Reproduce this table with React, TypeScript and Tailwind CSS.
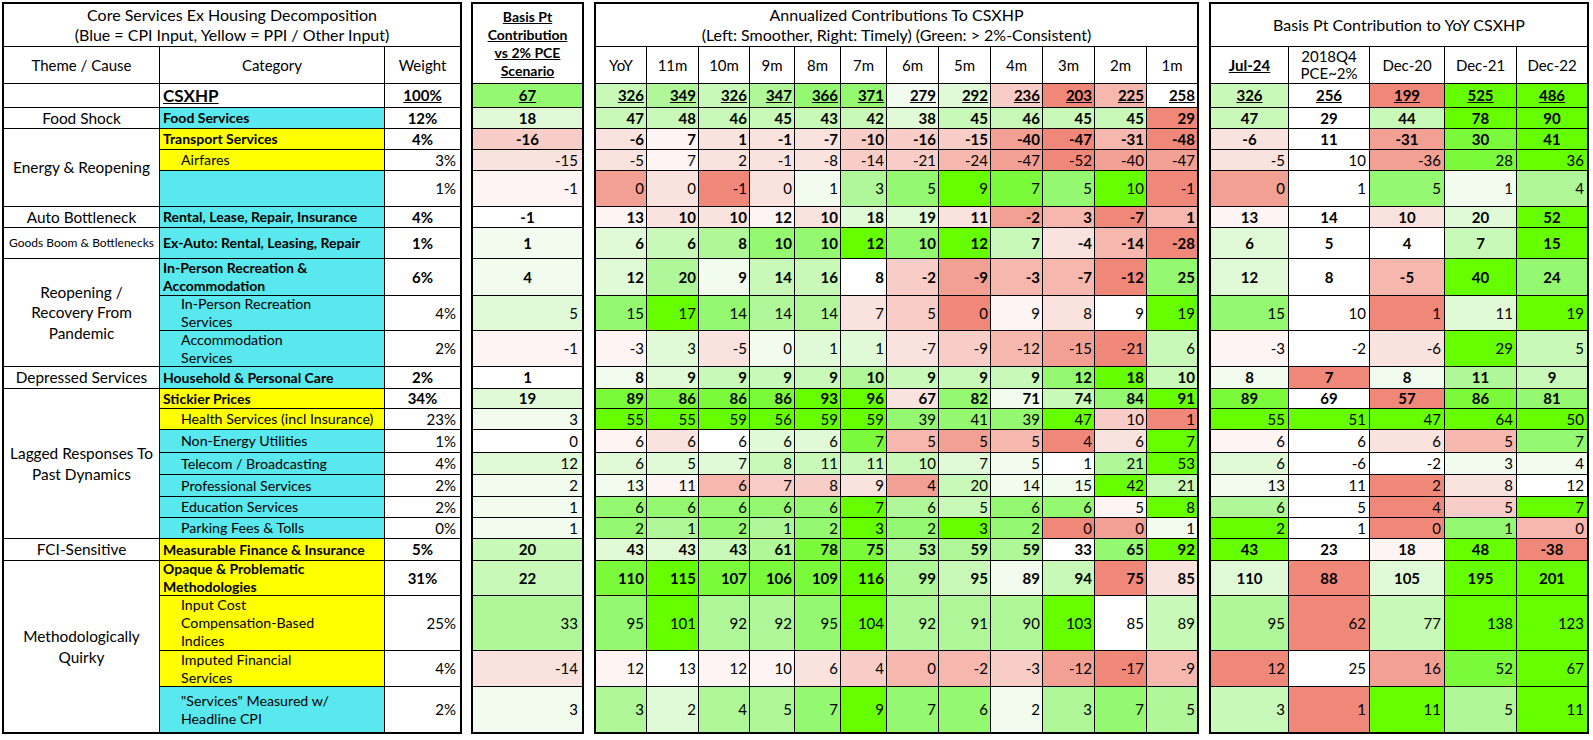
import React from 'react';

const BG: Record<string, string> = {
  W: 'bg-white',
  g0: 'bg-[#f2fcee]',
  g1: 'bg-[#e0fad7]',
  g2: 'bg-[#c9f9b8]',
  g3: 'bg-[#aff799]',
  g4: 'bg-[#94f870]',
  g5: 'bg-[#7bfa3c]',
  G: 'bg-[#66ff00]',
  r0: 'bg-[#fdf4f3]',
  r1: 'bg-[#fae2de]',
  r2: 'bg-[#f8cdc7]',
  r3: 'bg-[#f5b7ae]',
  r4: 'bg-[#f29f94]',
  R: 'bg-[#f0887a]',
};

const CAT_BG: Record<string, string> = {
  c: 'bg-[#58e8ee]',
  y: 'bg-[#ffff00]',
  w: 'bg-white',
};

const SPAN: Record<number, string> = {
  1: '',
  3: 'row-span-3',
  4: 'row-span-4',
  7: 'row-span-7',
};

const GRID_ROWS =
  'grid-rows-[43px_37px_24px_21px_21px_21px_36px_21px_31px_37px_35px_36px_22px_20px_21px_23px_22px_22px_21px_21px_22px_35px_55px_36px_45px]';

type Kind = 'top' | 'bold' | 'sub';

type Row = {
  theme?: string;
  span?: number;
  small?: boolean;
  cat: string;
  catBg: 'c' | 'y' | 'w';
  kind: Kind;
  weight: string;
  bp: string;
  bpC: string;
  ann: string;
  annC: string;
  yoy: string;
  yoyC: string;
};

const ROWS: Row[] = [
  { theme: '', span: 1, cat: 'CSXHP', catBg: 'w', kind: 'top', weight: '100%', bp: '67', bpC: 'g4',
    ann: '326 349 326 347 366 371 279 292 236 203 225 258', annC: 'g2 g3 g2 g3 g4 g4 g0 g1 r2 R r3 W',
    yoy: '326 256 199 525 486', yoyC: 'g2 W R G G' },
  { theme: 'Food Shock', span: 1, cat: 'Food Services', catBg: 'c', kind: 'bold', weight: '12%', bp: '18', bpC: 'g1',
    ann: '47 48 46 45 43 42 38 45 46 45 45 29', annC: 'g2 g2 g2 g2 g2 g2 g1 g2 g2 g2 g2 R',
    yoy: '47 29 44 78 90', yoyC: 'g2 W g2 G G' },
  { theme: 'Energy & Reopening', span: 3, cat: 'Transport Services', catBg: 'y', kind: 'bold', weight: '4%', bp: '-16', bpC: 'r2',
    ann: '-6 7 1 -1 -7 -10 -16 -15 -40 -47 -31 -48', annC: 'r1 r0 r1 r1 r1 r2 r2 r2 r4 R r3 R',
    yoy: '-6 11 -31 30 41', yoyC: 'r1 W r4 g5 G' },
  { cat: 'Airfares', catBg: 'y', kind: 'sub', weight: '3%', bp: '-15', bpC: 'r1',
    ann: '-5 7 2 -1 -8 -14 -21 -24 -47 -52 -40 -47', annC: 'r1 r0 r1 r1 r1 r2 r2 r3 r4 R r4 r4',
    yoy: '-5 10 -36 28 36', yoyC: 'r1 W r4 g5 G' },
  { cat: '', catBg: 'c', kind: 'sub', weight: '1%', bp: '-1', bpC: 'r0',
    ann: '0 0 -1 0 1 3 5 9 7 5 10 -1', annC: 'r4 r1 R r1 g0 g3 g4 G g5 g4 G R',
    yoy: '0 1 5 1 4', yoyC: 'r4 W g4 g0 g3' },
  { theme: 'Auto Bottleneck', span: 1, cat: 'Rental, Lease, Repair, Insurance', catBg: 'c', kind: 'bold', weight: '4%', bp: '-1', bpC: 'W',
    ann: '13 10 10 12 10 18 19 11 -2 3 -7 1', annC: 'r0 r1 r1 r0 r1 g1 g1 r1 r4 r3 R r3',
    yoy: '13 14 10 20 52', yoyC: 'r0 W r1 g1 G' },
  { theme: 'Goods Boom & Bottlenecks', span: 1, small: true, cat: 'Ex-Auto: Rental, Leasing, Repair', catBg: 'c', kind: 'bold', weight: '1%', bp: '1', bpC: 'g0',
    ann: '6 6 8 10 10 12 10 12 7 -4 -14 -28', annC: 'g1 g2 g3 g4 g4 G g4 G g2 r1 r3 R',
    yoy: '6 5 4 7 15', yoyC: 'g1 W W g2 G' },
  { theme: 'Reopening /\nRecovery From\nPandemic', span: 3, cat: 'In-Person Recreation &\nAccommodation', catBg: 'c', kind: 'bold', weight: '6%', bp: '4', bpC: 'g0',
    ann: '12 20 9 14 16 8 -2 -9 -3 -7 -12 25', annC: 'g1 g3 g0 g2 g2 W r2 r4 r3 r3 R g4',
    yoy: '12 8 -5 40 24', yoyC: 'g1 W r3 G g4' },
  { cat: 'In-Person Recreation\nServices', catBg: 'c', kind: 'sub', weight: '4%', bp: '5', bpC: 'g1',
    ann: '15 17 14 14 14 7 5 0 9 8 9 19', annC: 'g4 G g4 g3 g3 r1 r2 R r0 r1 W G',
    yoy: '15 10 1 11 19', yoyC: 'g4 W R g1 G' },
  { cat: 'Accommodation\nServices', catBg: 'c', kind: 'sub', weight: '2%', bp: '-1', bpC: 'r0',
    ann: '-3 3 -5 0 1 1 -7 -9 -12 -15 -21 6', annC: 'r0 g1 r1 g0 g1 g1 r1 r2 r3 r4 R g2',
    yoy: '-3 -2 -6 29 5', yoyC: 'r0 W r1 G g2' },
  { theme: 'Depressed Services', span: 1, cat: 'Household & Personal Care', catBg: 'c', kind: 'bold', weight: '2%', bp: '1', bpC: 'W',
    ann: '8 9 9 9 9 10 9 9 9 12 18 10', annC: 'g0 g1 g2 g2 g2 g3 g2 g2 g2 g4 G g2',
    yoy: '8 7 8 11 9', yoyC: 'g0 R g0 g3 g2' },
  { theme: 'Lagged Responses To\nPast Dynamics', span: 7, cat: 'Stickier Prices', catBg: 'y', kind: 'bold', weight: '34%', bp: '19', bpC: 'g1',
    ann: '89 86 86 86 93 96 67 82 71 74 84 91', annC: 'g5 g5 g5 g5 G G r1 g4 g0 g2 g4 G',
    yoy: '89 69 57 86 81', yoyC: 'g5 W R g5 g4' },
  { cat: 'Health Services (incl Insurance)', catBg: 'y', kind: 'sub', weight: '23%', bp: '3', bpC: 'g0',
    ann: '55 55 59 56 59 59 39 41 39 47 10 1', annC: 'G G G G G G g4 g4 g4 G r2 R',
    yoy: '55 51 47 64 50', yoyC: 'G G G G G' },
  { cat: 'Non-Energy Utilities', catBg: 'c', kind: 'sub', weight: '1%', bp: '0', bpC: 'W',
    ann: '6 6 6 6 6 7 5 5 5 4 6 7', annC: 'r0 r1 W g1 g1 g5 r3 r4 r3 R r1 G',
    yoy: '6 6 6 5 7', yoyC: 'r0 W r1 r3 g4' },
  { cat: 'Telecom / Broadcasting', catBg: 'c', kind: 'sub', weight: '4%', bp: '12', bpC: 'g1',
    ann: '6 5 7 8 11 11 10 7 5 1 21 53', annC: 'g1 g1 g1 g2 g2 g2 g2 g1 g0 W g3 G',
    yoy: '6 -6 -2 3 4', yoyC: 'g1 W W g0 g0' },
  { cat: 'Professional Services', catBg: 'c', kind: 'sub', weight: '2%', bp: '2', bpC: 'g0',
    ann: '13 11 6 7 8 9 4 20 14 15 42 21', annC: 'g0 r0 r3 r2 r2 r1 r4 g2 g0 g0 G g2',
    yoy: '13 11 2 8 12', yoyC: 'g0 W R r1 W' },
  { cat: 'Education Services', catBg: 'c', kind: 'sub', weight: '2%', bp: '1', bpC: 'g0',
    ann: '6 6 6 6 6 7 6 5 6 6 5 8', annC: 'g4 g4 g4 g4 g4 G g3 g2 g4 g4 r0 G',
    yoy: '6 5 4 5 7', yoyC: 'g3 W R r2 G' },
  { cat: 'Parking Fees & Tolls', catBg: 'c', kind: 'sub', weight: '0%', bp: '1', bpC: 'g0',
    ann: '2 1 2 1 2 3 2 3 2 0 0 1', annC: 'g4 g3 g4 g3 g4 G g4 G g4 R r4 g0',
    yoy: '2 1 0 1 0', yoyC: 'G W R g4 r3' },
  { theme: 'FCI-Sensitive', span: 1, cat: 'Measurable Finance & Insurance', catBg: 'y', kind: 'bold', weight: '5%', bp: '20', bpC: 'g2',
    ann: '43 43 43 61 78 75 53 59 59 33 65 92', annC: 'g1 g1 g2 g3 g5 g5 g3 g3 g3 W g4 G',
    yoy: '43 23 18 48 -38', yoyC: 'G W r0 G R' },
  { theme: 'Methodologically\nQuirky', span: 4, cat: 'Opaque & Problematic\nMethodologies', catBg: 'y', kind: 'bold', weight: '31%', bp: '22', bpC: 'g2',
    ann: '110 115 107 106 109 116 99 95 89 94 75 85', annC: 'g5 G g5 g5 g5 G g3 g2 g0 g2 R r1',
    yoy: '110 88 105 195 201', yoyC: 'g1 R g1 G G' },
  { cat: 'Input Cost\nCompensation-Based\nIndices', catBg: 'y', kind: 'sub', weight: '25%', bp: '33', bpC: 'g3',
    ann: '95 101 92 92 95 104 92 91 90 103 85 89', annC: 'g4 G g3 g3 g4 G g3 g3 g3 G W g2',
    yoy: '95 62 77 138 123', yoyC: 'g3 R g2 G G' },
  { cat: 'Imputed Financial\nServices', catBg: 'y', kind: 'sub', weight: '4%', bp: '-14', bpC: 'r1',
    ann: '12 13 12 10 6 4 0 -2 -3 -12 -17 -9', annC: 'r0 W r0 r0 r1 r2 r3 r3 r2 r4 R r3',
    yoy: '12 25 16 52 67', yoyC: 'R W r4 g5 G' },
  { cat: '"Services" Measured w/\nHeadline CPI', catBg: 'c', kind: 'sub', weight: '2%', bp: '3', bpC: 'g0',
    ann: '3 2 4 5 7 9 7 6 2 3 7 5', annC: 'g3 g1 g3 g3 g4 G g4 g4 g0 g3 g4 g3',
    yoy: '3 1 11 5 11', yoyC: 'g2 R G g3 G' },
];

const LAST = ROWS.length - 1;

function b(lastCol: boolean, lastRow: boolean) {
  return `${lastCol ? '' : 'border-r'} ${lastRow ? '' : 'border-b'} border-black`;
}

function numText(kind: Kind) {
  if (kind === 'top') return 'font-bold underline text-[15px]';
  if (kind === 'bold') return 'font-bold text-[15px]';
  return 'text-[15px]';
}

function Table1() {
  return (
    <div className={`grid border-2 border-black grid-cols-[156px_225px_75px] ${GRID_ROWS}`}>
      <div className="col-span-3 border-b border-black flex flex-col items-center justify-center text-[16px] leading-[20px] whitespace-nowrap">
        <span>Core Services Ex Housing Decomposition</span>
        <span>(Blue = CPI Input, Yellow = PPI / Other Input)</span>
      </div>
      <div className="border-r border-b border-black flex items-center justify-center text-[15px]">Theme / Cause</div>
      <div className="border-r border-b border-black flex items-center justify-center text-[15px]">Category</div>
      <div className="border-b border-black flex items-center justify-center text-[15px]">Weight</div>
      {ROWS.map((r, i) => {
        const last = i === LAST;
        const themeLast = r.theme !== undefined && i + (r.span || 1) - 1 === LAST;
        const catCls =
          r.kind === 'top'
            ? 'font-bold underline text-[17px] pl-[3px]'
            : r.kind === 'bold'
            ? 'font-bold text-[14px] leading-[18px] pl-[3px]'
            : 'text-[14.2px] leading-[18px] pl-[21px]';
        const wCls =
          r.kind === 'sub'
            ? 'justify-end pr-[4px] text-[15px]'
            : r.kind === 'top'
            ? 'justify-center font-bold underline text-[15px]'
            : 'justify-center font-bold text-[15px]';
        return (
          <React.Fragment key={i}>
            {r.theme !== undefined && (
              <div
                className={`${SPAN[r.span || 1]} ${b(false, themeLast)} flex items-center justify-center text-center whitespace-pre ${
                  r.small ? 'text-[12px]' : 'text-[15.4px] leading-[20.5px]'
                }`}
              >
                {r.theme}
              </div>
            )}
            <div className={`${b(false, last)} ${CAT_BG[r.catBg]} flex items-center whitespace-pre overflow-hidden ${catCls}`}>{r.cat}</div>
            <div className={`${b(true, last)} flex items-center ${wCls}`}>{r.weight}</div>
          </React.Fragment>
        );
      })}
    </div>
  );
}

function Table2() {
  return (
    <div className={`ml-[9px] grid border-2 border-black grid-cols-[109px] ${GRID_ROWS}`}>
      <div className="row-span-2 border-b border-black flex flex-col items-center justify-center font-bold underline text-[14px] leading-[18px] text-center whitespace-nowrap">
        <span>Basis Pt</span>
        <span>Contribution</span>
        <span>vs 2% PCE</span>
        <span>Scenario</span>
      </div>
      {ROWS.map((r, i) => (
        <div
          key={i}
          className={`${b(true, i === LAST)} ${BG[r.bpC]} flex items-center ${
            r.kind === 'sub' ? 'justify-end pr-[4px]' : 'justify-center'
          } ${numText(r.kind)}`}
        >
          {r.bp}
        </div>
      ))}
    </div>
  );
}

const ANN_HEAD = ['YoY', '11m', '10m', '9m', '8m', '7m', '6m', '5m', '4m', '3m', '2m', '1m'];

function Table3() {
  return (
    <div className={`ml-[10px] grid border-2 border-black grid-cols-[51px_52px_51px_45px_46px_46px_52px_52px_52px_52px_52px_50px] ${GRID_ROWS}`}>
      <div className="col-span-12 border-b border-black flex flex-col items-center justify-center text-[16px] leading-[20px] whitespace-nowrap">
        <span>Annualized Contributions To CSXHP</span>
        <span>(Left: Smoother, Right: Timely) (Green: &gt; 2%-Consistent)</span>
      </div>
      {ANN_HEAD.map((h, j) => (
        <div key={h} className={`${b(j === 11, false)} flex items-center justify-center text-[15px]`}>
          {h}
        </div>
      ))}
      {ROWS.map((r, i) => {
        const vals = r.ann.split(' ');
        const cols = r.annC.split(' ');
        return (
          <React.Fragment key={i}>
            {vals.map((v, j) => (
              <div
                key={j}
                className={`${b(j === 11, i === LAST)} ${BG[cols[j]]} flex items-center justify-end pr-[2px] ${numText(r.kind)}`}
              >
                {v}
              </div>
            ))}
          </React.Fragment>
        );
      })}
    </div>
  );
}

function Table4() {
  return (
    <div className={`ml-[10px] grid border-2 border-black grid-cols-[78px_81px_75px_72px_70px] ${GRID_ROWS}`}>
      <div className="col-span-5 border-b border-black flex items-center justify-center text-[16px] whitespace-nowrap">
        Basis Pt Contribution to YoY CSXHP
      </div>
      <div className="border-r border-b border-black flex items-center justify-center font-bold underline text-[15px]">Jul-24</div>
      <div className="border-r border-b border-black flex flex-col items-center justify-center text-[15px] leading-[17px]">
        <span>2018Q4</span>
        <span>PCE~2%</span>
      </div>
      <div className="border-r border-b border-black flex items-center justify-center text-[15px]">Dec-20</div>
      <div className="border-r border-b border-black flex items-center justify-center text-[15px]">Dec-21</div>
      <div className="border-b border-black flex items-center justify-center text-[15px]">Dec-22</div>
      {ROWS.map((r, i) => {
        const vals = r.yoy.split(' ');
        const cols = r.yoyC.split(' ');
        return (
          <React.Fragment key={i}>
            {vals.map((v, j) => (
              <div
                key={j}
                className={`${b(j === 4, i === LAST)} ${BG[cols[j]]} flex items-center ${
                  r.kind === 'sub' ? 'justify-end pr-[3px]' : 'justify-center'
                } ${numText(r.kind)}`}
              >
                {v}
              </div>
            ))}
          </React.Fragment>
        );
      })}
    </div>
  );
}

export default function App() {
  return (
    <div className="w-[1593px] h-[740px] bg-white text-black [font-family:Lato,sans-serif] flex items-start pt-[2px] pl-[2px] overflow-hidden">
      <Table1 />
      <Table2 />
      <Table3 />
      <Table4 />
    </div>
  );
}
